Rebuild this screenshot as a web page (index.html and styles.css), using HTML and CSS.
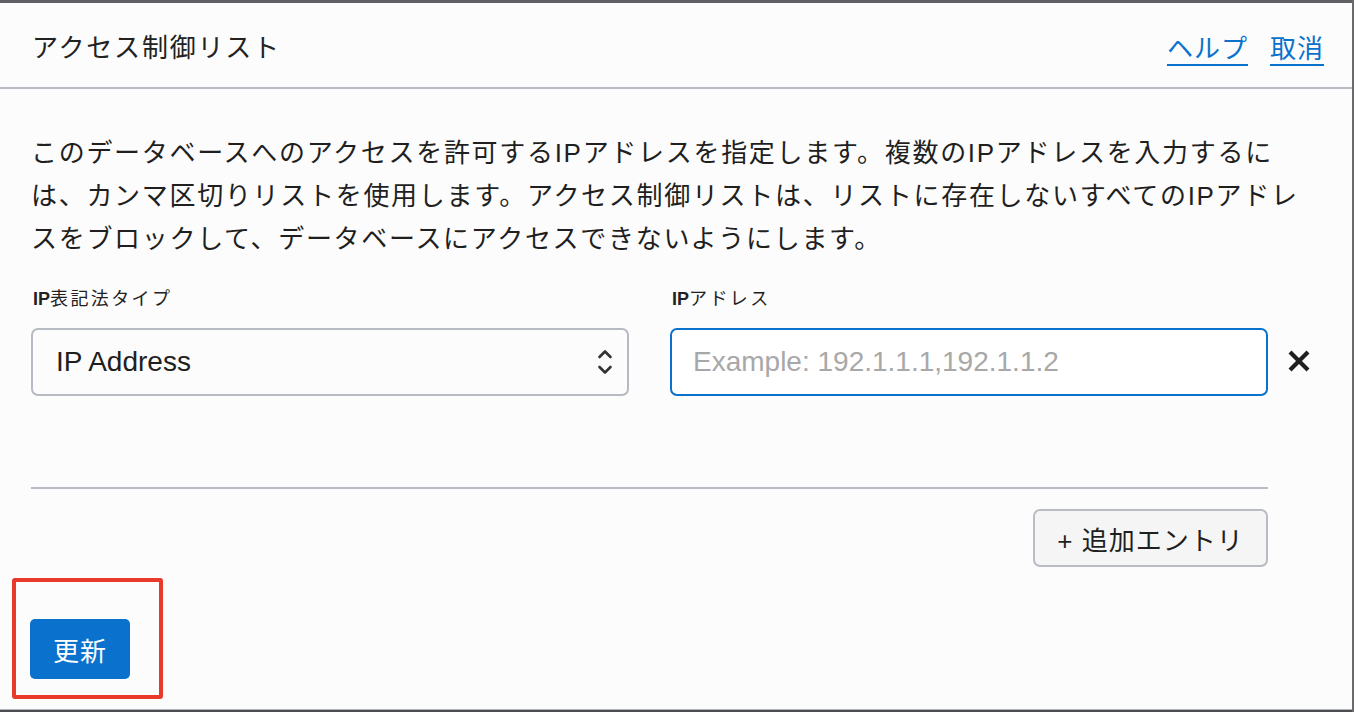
FILE: index.html
```html
<!DOCTYPE html>
<html lang="ja">
<head>
<meta charset="utf-8">
<title>アクセス制御リスト</title>
<link rel="stylesheet" href="styles.css">
</head>
<body>
<div class="page">
  <div class="topbar"></div>
  <header class="header">
    <h1 class="title">アクセス制御リスト</h1>
    <nav class="links">
      <a href="#" class="link">ヘルプ</a>
      <a href="#" class="link">取消</a>
    </nav>
  </header>
  <main class="content">
    <p class="desc">このデータベースへのアクセスを許可するIPアドレスを指定します。複数のIPアドレスを入力するに<br>は、カンマ区切りリストを使用します。アクセス制御リストは、リストに存在しないすべてのIPアドレ<br>スをブロックして、データベースにアクセスできないようにします。</p>
    <div class="row">
      <div class="field">
        <label class="label"><b>IP</b>表記法タイプ</label>
        <div class="select">
          <span>IP Address</span>
          <svg class="updown" width="16" height="28" viewBox="0 0 16 28"><path d="M2.5 9 L8 3.5 L13.5 9" fill="none" stroke="#333" stroke-width="2.6" stroke-linecap="round" stroke-linejoin="round"/><path d="M2.5 19 L8 24.5 L13.5 19" fill="none" stroke="#333" stroke-width="2.6" stroke-linecap="round" stroke-linejoin="round"/></svg>
        </div>
      </div>
      <div class="field">
        <label class="label"><b>IP</b>アドレス</label>
        <div class="input"><span class="placeholder">Example: 192.1.1.1,192.1.1.2</span></div>
      </div>
      <button class="remove" aria-label="削除">
        <svg width="22" height="22" viewBox="0 0 22 22"><path d="M3.5 3.5 L18.5 18.5 M18.5 3.5 L3.5 18.5" stroke="#1f1f1f" stroke-width="4.2" stroke-linecap="square"/></svg>
      </button>
    </div>
    <div class="divider"></div>
    <div class="addrow">
      <button class="addbtn">+ 追加エントリ</button>
    </div>
    <div class="footer">
      <button class="primary">更新</button>
    </div>
  </main>
  <div class="annot"></div>
  <div class="bottombar"></div>
</div>
</body>
</html>
```

FILE: styles.css
```css
* { box-sizing: border-box; }
html, body {
  margin: 0;
  padding: 0;
  background: #fcfcfc;
}
body {
  font-family: "Liberation Sans", "Noto Sans CJK JP", sans-serif;
  color: #1f1f1f;
  width: 1354px;
  height: 712px;
  overflow: hidden;
}
.page {
  position: relative;
  width: 1354px;
  height: 712px;
  border-right: 2px solid #6a6b6e;
}
.topbar {
  height: 3px;
  background: #606164;
}
.header {
  height: 86px;
  display: flex;
  align-items: center;
  justify-content: space-between;
  padding: 0 28px 0 32px;
  border-bottom: 2px solid #b9bcc3;
}
.title {
  margin: 0;
  font-weight: normal;
  font-size: 26px;
  letter-spacing: 1.8px;
  color: #222;
}
.links {
  display: flex;
  gap: 22px;
  padding-top: 2px;
}
.link {
  color: #0a72cd;
  font-size: 26px;
  letter-spacing: 1px;
  text-decoration: underline;
  text-underline-offset: 6px;
  text-decoration-thickness: 1.5px;
}
.content {
  padding: 0 31px;
}
.desc {
  margin: 0;
  padding-top: 43px;
  font-size: 26px;
  line-height: 43px;
  letter-spacing: 1.7px;
  color: #1f1f1f;
  width: 1320px;
}
.row {
  display: flex;
  align-items: flex-end;
  margin-top: 26px;
}
.field {
  width: 598px;
  margin-right: 41px;
  display: flex;
  flex-direction: column;
}
.label {
  font-size: 18px;
  line-height: 24px;
  letter-spacing: 2.4px;
  color: #222;
  margin-bottom: 17px;
  padding-left: 2px;
}
.label b { font-weight: bold; letter-spacing: 0; }
.select {
  height: 68px;
  border: 2px solid #b6bac2;
  border-radius: 7px;
  background: #fcfcfc;
  display: flex;
  align-items: center;
  justify-content: space-between;
  padding: 0 14px 0 23px;
  font-size: 28px;
  color: #1f1f1f;
}
.updown { display: block; }
.input {
  height: 68px;
  border: 2px solid #0a72cd;
  border-radius: 7px;
  background: #fff;
  display: flex;
  align-items: center;
  padding: 0 21px;
  font-size: 28px;
}
.placeholder { color: #a8a8a8; }
.remove {
  border: 0;
  background: none;
  padding: 0;
  margin: 0 0 24px -21px;
  width: 22px;
  height: 22px;
}
.remove svg { display: block; }
.divider {
  width: 1237px;
  height: 2px;
  background: #b9bcc3;
  margin-top: 91px;
}
.addrow {
  width: 1237px;
  display: flex;
  justify-content: flex-end;
  margin-top: 20px;
}
.addbtn {
  width: 235px;
  height: 58px;
  background: #f5f5f5;
  border: 2px solid #b9bcc3;
  border-radius: 7px;
  font-family: "Liberation Sans", "Noto Sans CJK JP", sans-serif;
  font-size: 26px;
  letter-spacing: 1px;
  color: #1f1f1f;
  padding: 0;
}
.footer {
  margin-top: 52px;
}
.primary {
  width: 100px;
  height: 60px;
  margin-left: -1px;
  background: #0a72cd;
  border: 0;
  border-radius: 5px;
  color: #fff;
  font-family: "Liberation Sans", "Noto Sans CJK JP", sans-serif;
  font-size: 26px;
  letter-spacing: 1px;
  padding: 0;
}
.annot {
  position: absolute;
  left: 12px;
  top: 578px;
  width: 151px;
  height: 121px;
  border: 4px solid #e8392b;
  border-radius: 3px;
}
.bottombar {
  position: absolute;
  left: 0;
  bottom: 0;
  width: 100%;
  height: 3px;
  border-top: 1px solid #b0b4ba;
  background: #4c4d50;
}
```
